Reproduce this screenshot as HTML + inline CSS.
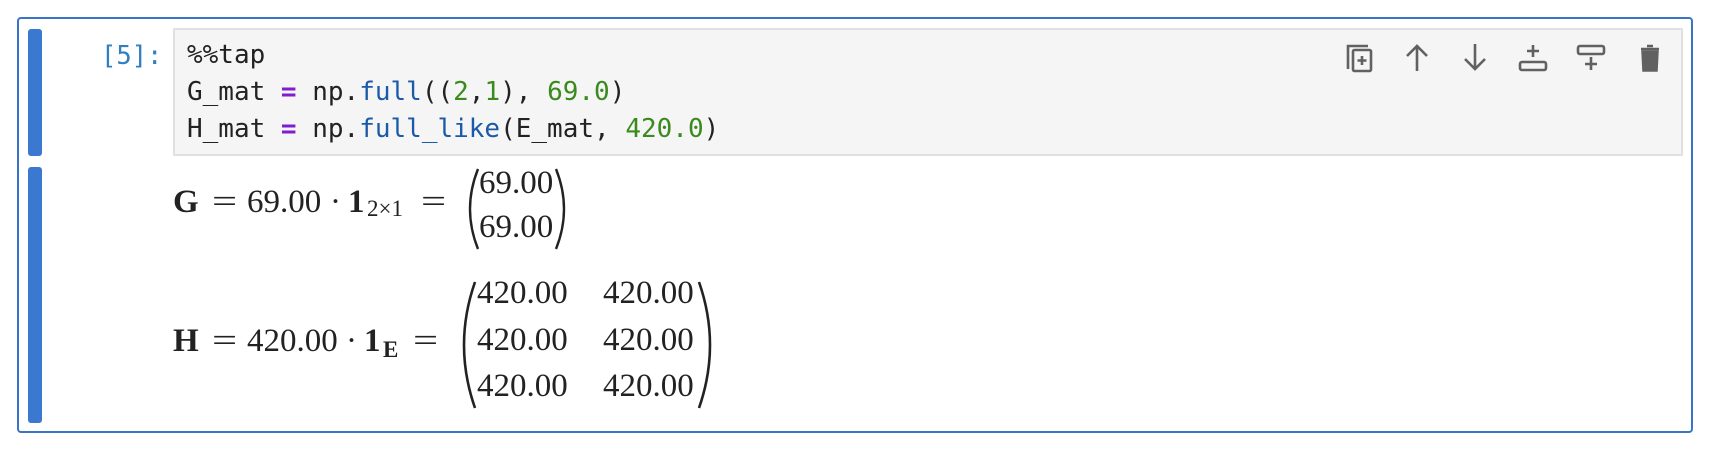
<!DOCTYPE html>
<html><head><meta charset="utf-8"><style>
html,body{margin:0;padding:0;background:#fff;width:1714px;height:452px;overflow:hidden;position:relative}
.a{position:absolute;white-space:pre}
.m{font-family:"Liberation Serif",serif;font-size:33px;color:#222;line-height:normal}
.eq{transform:scaleX(1.35);transform-origin:left}
.c{font-family:"DejaVu Sans Mono","Liberation Mono",monospace;font-size:26px;color:#222;line-height:normal}
.b{font-weight:bold}
.kw{color:#7d1fd0;font-weight:bold}.fn{color:#1a5aa8}.nu{color:#3a8a1d}
</style></head><body>
<div class="a" style="left:17px;top:17px;width:1676px;height:416px;border:2px solid #3a74c8;border-radius:4px;box-sizing:border-box"></div>
<div class="a" style="left:28px;top:29px;width:14px;height:127px;background:#3b78cf;border-radius:3px"></div>
<div class="a" style="left:28px;top:167px;width:14px;height:256px;background:#3b78cf;border-radius:3px"></div>
<div class="a" style="left:173px;top:28px;width:1510px;height:128px;background:#f5f5f5;border:2px solid #e0e0e0;box-sizing:border-box"></div>
<div class="a c" style="left:101px;top:41px;color:#307fc1;font-size:25.5px">[5]:</div>
<div class="a c" style="left:187px;top:40px">%%tap</div>
<div class="a c" style="left:187px;top:77px">G_mat <span class="kw">=</span> np.<span class="fn">full</span>((<span class="nu">2</span>,<span class="nu">1</span>), <span class="nu">69.0</span>)</div>
<div class="a c" style="left:187px;top:114px">H_mat <span class="kw">=</span> np.<span class="fn">full_like</span>(E_mat, <span class="nu">420.0</span>)</div>
<svg class="a" style="left:1340px;top:40px" width="330" height="36" viewBox="0 0 330 36" fill="none" stroke="#616161" stroke-width="2.6">
<path d="M8 29V6h20"/><rect x="13" y="10" width="18" height="21" rx="1.5"/><path d="M22 16v9M17.5 20.5h9"/>
<path d="M77 31V6M67 16l10-10 10 10"/>
<path d="M135 4v25M125 19l10 10 10-10"/>
<rect x="180" y="22" width="26" height="8" rx="2"/><path d="M193 5v12M187 11h12"/>
<rect x="238" y="6" width="26" height="8" rx="2"/><path d="M251 17v13M245 24h12"/>
<path d="M301 9h18M307 6h6" /><path d="M302 11h16l-1 20h-14z" fill="#616161" stroke-width="1.5"/>
</svg>
<div class="a m b" style="left:173px;top:184px">G</div>
<div class="a m eq" style="left:212px;top:184px">=</div>
<div class="a m" style="left:247px;top:184px">69.00</div>
<div class="a m" style="left:330px;top:184px">·</div>
<div class="a m b" style="left:348px;top:184px">1</div>
<div class="a m" style="left:367px;top:196px;font-size:23px">2×1</div>
<div class="a m eq" style="left:421px;top:184px">=</div>
<svg class="a" style="left:458px;top:167px" width="120" height="84" viewBox="0 0 120 84" fill="none" stroke="#222" stroke-width="2.4"><path d="M20 2Q4 42 20 82"/><path d="M98 2Q114 42 98 82"/></svg>
<div class="a m" style="left:479px;top:165px">69.00</div>
<div class="a m" style="left:479px;top:209px">69.00</div>
<div class="a m b" style="left:173px;top:323px">H</div>
<div class="a m eq" style="left:212px;top:323px">=</div>
<div class="a m" style="left:247px;top:323px">420.00</div>
<div class="a m" style="left:346px;top:323px">·</div>
<div class="a m b" style="left:364px;top:323px">1</div>
<div class="a m b" style="left:383px;top:337px;font-size:23px">E</div>
<div class="a m eq" style="left:413px;top:323px">=</div>
<svg class="a" style="left:453px;top:280px" width="270" height="130" viewBox="0 0 270 130" fill="none" stroke="#222" stroke-width="2.6"><path d="M22 2Q0 65 22 128"/><path d="M246 2Q268 65 246 128"/></svg>
<div class="a m" style="left:477px;top:275px">420.00</div>
<div class="a m" style="left:603px;top:275px">420.00</div>
<div class="a m" style="left:477px;top:322px">420.00</div>
<div class="a m" style="left:603px;top:322px">420.00</div>
<div class="a m" style="left:477px;top:368px">420.00</div>
<div class="a m" style="left:603px;top:368px">420.00</div>
</body></html>
